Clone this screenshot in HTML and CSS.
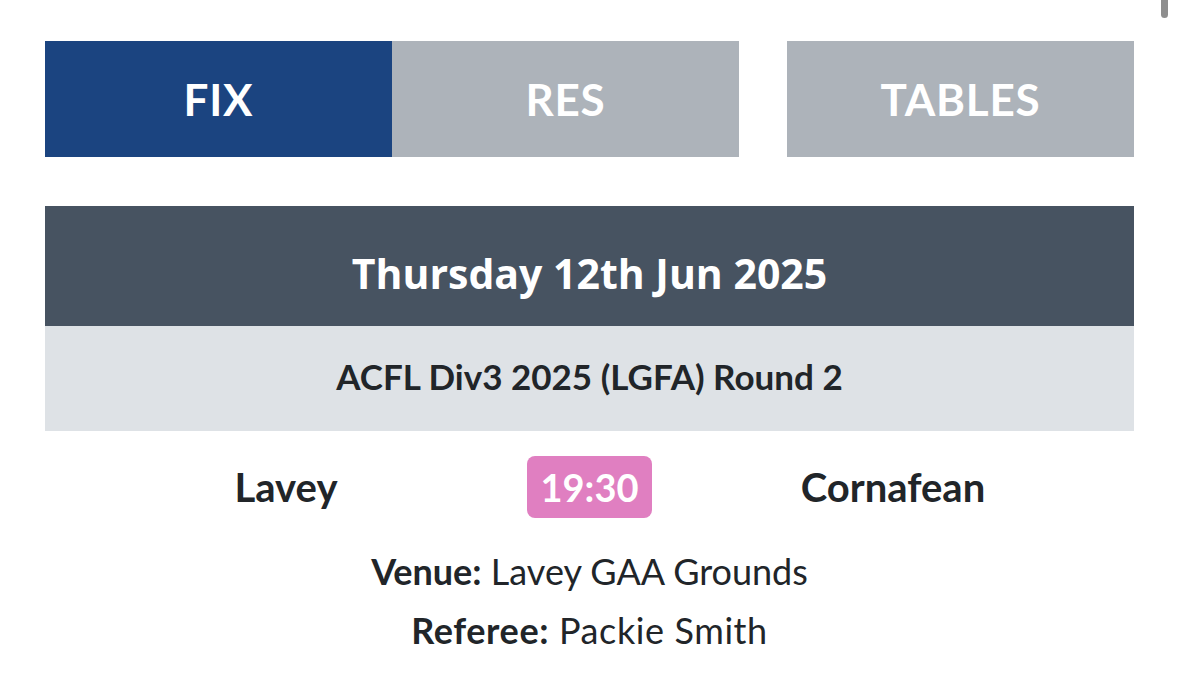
FILE: index.html
```html
<!DOCTYPE html>
<html>
<head>
<meta charset="utf-8">
<link rel="stylesheet" href="styles.css">
</head>
<body>
<div class="scrollbar"></div>
<div class="page">
  <nav class="tabs">
    <div class="tab-pair">
      <a class="tab active">FIX</a>
      <a class="tab">RES</a>
    </div>
    <a class="tab tab-single">TABLES</a>
  </nav>
  <div class="fixture">
    <div class="date">Thursday 12th Jun 2025</div>
    <div class="comp">ACFL Div3 2025 (LGFA) Round 2</div>
    <div class="teams">
      <div class="team">Lavey</div>
      <div class="time">19:30</div>
      <div class="team">Cornafean</div>
    </div>
    <div class="info"><b>Venue:</b> Lavey GAA Grounds</div>
    <div class="info"><b>Referee:</b> Packie Smith</div>
  </div>
</div>
</body>
</html>
```
FILE: styles.css
```css
html, body {
  margin: 0;
  padding: 0;
  background: #ffffff;
}
body {
  font-family: Lato, "Liberation Sans", sans-serif;
  color: #212529;
  width: 1179px;
  height: 684px;
  overflow: hidden;
  position: relative;
}
.scrollbar {
  position: absolute;
  top: -4px;
  right: 11px;
  width: 7px;
  height: 22px;
  border-radius: 4px;
  background: #8e8e8e;
}
.page {
  padding: 41px 45px 0 45px;
}
.tabs {
  display: flex;
  gap: 48px;
}
.tab-pair {
  display: flex;
  flex: 2;
}
.tab {
  flex: 1;
  height: 116px;
  display: flex;
  align-items: center;
  justify-content: center;
  background: #adb3ba;
  color: #ffffff;
  font-weight: 700;
  font-size: 44px;
  letter-spacing: 0.8px;
}
.tab.active {
  background: #1b4480;
}
.tab-single {
  flex: 0 0 347px;
}
.fixture {
  margin-top: 49px;
}
.date {
  height: 120px;
  box-sizing: border-box;
  padding-top: 14px;
  background: #475361;
  color: #ffffff;
  display: flex;
  align-items: center;
  justify-content: center;
  font-family: "Open Sans", sans-serif;
  font-weight: 700;
  font-size: 41px;
}
.comp {
  height: 105px;
  box-sizing: border-box;
  padding-bottom: 6px;
  background: #dee2e6;
  display: flex;
  align-items: center;
  justify-content: center;
  font-weight: 700;
  font-size: 35px;
}
.teams {
  display: grid;
  grid-template-columns: 1fr 125px 1fr;
  align-items: center;
  margin-top: 25px;
}
.team {
  text-align: center;
  font-weight: 700;
  font-size: 40px;
}
.time {
  height: 62px;
  background: #e07fc1;
  color: #ffffff;
  border-radius: 8px;
  display: flex;
  align-items: center;
  justify-content: center;
  font-weight: 700;
  font-size: 38px;
}
.info {
  text-align: center;
  font-size: 36px;
  line-height: 59px;
}
.teams + .info {
  margin-top: 24px;
}
.info + .info {
  letter-spacing: 0.6px;
}
.info b {
  font-weight: 700;
}
```
